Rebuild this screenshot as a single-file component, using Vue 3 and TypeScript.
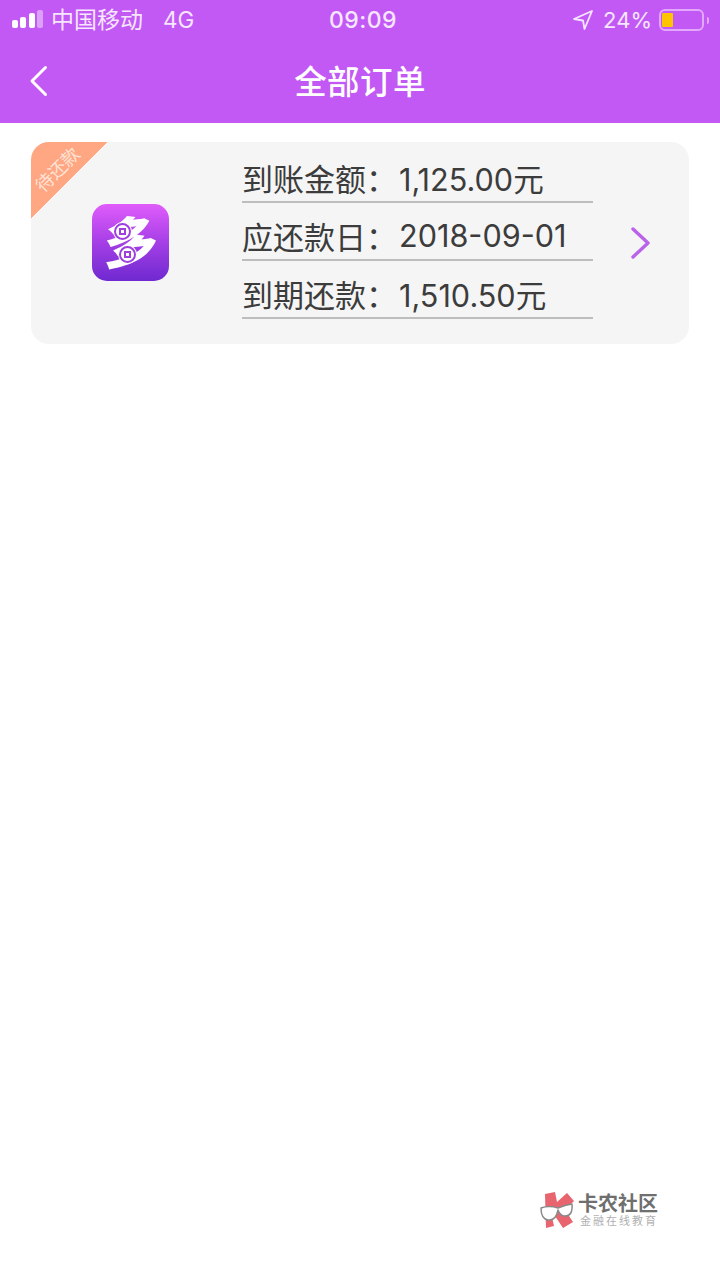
<template>
  <div class="page">
    <header class="top">
      <div class="status">
        <div class="status-left">
          <div class="signal">
            <i class="bar b1"></i>
            <i class="bar b2"></i>
            <i class="bar b3"></i>
            <i class="bar b4"></i>
          </div>
          <span class="carrier">中国移动</span>
          <span class="net">4G</span>
        </div>
        <div class="clock">09:09</div>
        <div class="status-right">
          <svg class="loc" width="20" height="20" viewBox="0 0 20 20">
            <path d="M19 1 L1 9 L10 10.5 L11.5 19 Z" fill="none" stroke="#f6e6fe" stroke-width="1.8" stroke-linejoin="round" />
          </svg>
          <span class="pct">24%</span>
          <div class="battery">
            <div class="level"></div>
          </div>
          <i class="tip"></i>
        </div>
      </div>
      <div class="nav">
        <svg class="back" width="20" height="34" viewBox="0 0 20 34">
          <path d="M16.5 3.5 L3 17 L16.5 30.5" fill="none" stroke="#fff" stroke-width="3" stroke-linecap="round" stroke-linejoin="round" />
        </svg>
        <h1>全部订单</h1>
      </div>
    </header>

    <main class="list">
      <section class="card" v-for="order in orders" :key="order.id">
        <div class="ribbon"><span>{{ order.status }}</span></div>
        <div class="logo">
          <span class="logo-char">多</span>
          <i class="coin c1"></i>
          <i class="coin c2"></i>
        </div>
        <div class="rows">
          <div class="row" v-for="row in order.rows" :key="row.label">
            <span class="label">{{ row.label }}</span>
            <span class="value">{{ row.value }}</span>
          </div>
        </div>
        <svg class="more" width="20" height="32" viewBox="0 0 20 32">
          <path d="M2 2 L17 16 L2 30" fill="none" stroke="#bb62ea" stroke-width="3.4" stroke-linecap="round" stroke-linejoin="round" />
        </svg>
      </section>
    </main>

    <div class="watermark">
      <svg width="36" height="38" viewBox="0 0 36 38">
        <path d="M5 3 L15 1 L17 11 L27 2 L34 10 L25 19 L33 31 L23 37 L15 25 L12 26 L14 35 L6 37 Z" fill="#e8646e" />
        <path d="M1 17 Q9 14 18 17 Q25 14 32 13 Q33 25 25 25 Q20 25 18 19 Q16 30 8 29 Q1 28 1 17 Z" fill="#fff" stroke="#8a8a8a" stroke-width="1.5" stroke-linejoin="round" />
      </svg>
      <div class="mark-text">
        <div class="mark-name">卡农社区</div>
        <div class="mark-sub">金融在线教育</div>
      </div>
    </div>
  </div>
</template>

<script setup lang="ts">
interface OrderRow {
  label: string
  value: string
}

interface Order {
  id: number
  status: string
  rows: OrderRow[]
}

const orders: Order[] = [
  {
    id: 1,
    status: '待还款',
    rows: [
      { label: '到账金额：', value: '1,125.00元' },
      { label: '应还款日：', value: '2018-09-01' },
      { label: '到期还款：', value: '1,510.50元' }
    ]
  }
]
</script>

<style>
body {
  background: #fff;
}
</style>

<style scoped>
.page {
  position: relative;
  width: 720px;
  height: 1280px;
  background: #fff;
  overflow: hidden;
  font-family: Inter, "Noto Sans CJK SC", sans-serif;
}

.top {
  height: 123px;
  background: #c259f5;
  color: #fff;
}

.status {
  height: 40px;
  display: grid;
  grid-template-columns: 1fr auto 1fr;
  align-items: center;
  color: #f6e6fe;
}

.status-left {
  display: flex;
  align-items: center;
  padding-left: 12px;
}

.signal {
  display: flex;
  align-items: flex-end;
  gap: 2.5px;
  width: 31px;
  margin-top: -2px;
}

.bar {
  display: block;
  width: 6px;
  border-radius: 2px;
  background: #fff;
}

.b1 { height: 8px; }
.b2 { height: 11px; }
.b3 { height: 15px; }
.b4 { height: 18px; background: #dca0f9; }

.carrier {
  margin-left: 8px;
  font-size: 23px;
  line-height: 38px;
  margin-bottom: 1px;
}

.net {
  margin-left: 20px;
  font-size: 22.5px;
  line-height: 38px;
  margin-bottom: 1px;
}

.clock {
  padding-left: 6px;
  font-size: 23px;
  font-weight: 500;
  letter-spacing: 0.5px;
}

.status-right {
  display: flex;
  align-items: center;
  justify-content: flex-end;
  padding-right: 11px;
}

.pct {
  margin-left: 10px;
  font-size: 22px;
}

.battery {
  margin-left: 7px;
  width: 45px;
  height: 22px;
  box-sizing: border-box;
  border: 2px solid #e3a8fb;
  border-radius: 6px;
  padding: 2px 1px;
}

.level {
  width: 10.5px;
  height: 14px;
  background: #ffc400;
  border-radius: 1px;
}

.tip {
  display: block;
  width: 2px;
  height: 7px;
  margin-left: 3px;
  background: #e3a8fb;
  border-radius: 0 2px 2px 0;
}

.nav {
  position: relative;
  height: 83px;
  display: flex;
  align-items: center;
  justify-content: center;
}

.nav h1 {
  margin: 0 0 5px;
  font-size: 32.5px;
  font-weight: 500;
  letter-spacing: 0.4px;
}

.back {
  position: absolute;
  left: 29px;
  top: 24px;
}

.list {
  padding: 19px 31px 0 31px;
}

.card {
  position: relative;
  height: 202px;
  display: flex;
  align-items: center;
  padding-left: 61px;
  background: #f5f5f5;
  border-radius: 18px;
  overflow: hidden;
}

.ribbon {
  position: absolute;
  left: 0;
  top: 0;
  width: 76px;
  height: 76px;
  background: linear-gradient(135deg, #ffa682 50%, transparent 50%);
}

.ribbon span {
  position: absolute;
  left: -3px;
  top: 16px;
  width: 60px;
  text-align: center;
  font-size: 18px;
  line-height: 24px;
  color: #ffe3d6;
  white-space: nowrap;
  transform: rotate(-45deg);
}

.logo {
  position: relative;
  flex: none;
  width: 77px;
  height: 77px;
  margin-bottom: 2px;
  border-radius: 15px;
  background: linear-gradient(180deg, #e05cfb 0%, #a53fe6 50%, #6f29d0 100%);
  display: flex;
  align-items: center;
  justify-content: center;
}

.logo-char {
  font-size: 54px;
  line-height: 77px;
  font-weight: 900;
  color: #fff;
  transform: skewY(-6deg);
}

.coin {
  position: absolute;
  width: 17px;
  height: 17px;
  box-sizing: border-box;
  border: 2px solid #a03fe0;
  border-radius: 50%;
  background: #fff;
  box-shadow: 0 0 0 1px #fff;
}

.coin::after {
  content: "";
  position: absolute;
  left: 3px;
  top: 3px;
  width: 7px;
  height: 7px;
  box-sizing: border-box;
  border: 2px solid #a03fe0;
}

.c1 { left: 22px; top: 19px; }
.c2 { left: 27px; top: 42px; }

.rows {
  flex: none;
  width: 351px;
  margin-left: 73px;
  align-self: flex-start;
  padding-top: 3px;
}

.row {
  box-sizing: border-box;
  height: 58px;
  padding-top: 9px;
  display: flex;
  align-items: center;
  border-bottom: 2px solid #bdbdbd;
  color: #3c3c3c;
  font-size: 31px;
  white-space: nowrap;
}

.label {
  width: 157px;
  flex: none;
}

.value {
  font-size: 30.6px;
}

.more {
  flex: none;
  margin-left: 38px;
  margin-bottom: 1px;
}

.watermark {
  position: absolute;
  left: 540px;
  top: 1191px;
  display: flex;
  gap: 2px;
}

.mark-text {
  padding-top: 2px;
}

.mark-name {
  font-size: 20px;
  line-height: 22px;
  font-weight: 700;
  color: #6f6f6f;
  white-space: nowrap;
}

.mark-sub {
  margin-left: 2px;
  font-size: 11px;
  line-height: 13px;
  letter-spacing: 2px;
  color: #b0b0b0;
  white-space: nowrap;
}
</style>
